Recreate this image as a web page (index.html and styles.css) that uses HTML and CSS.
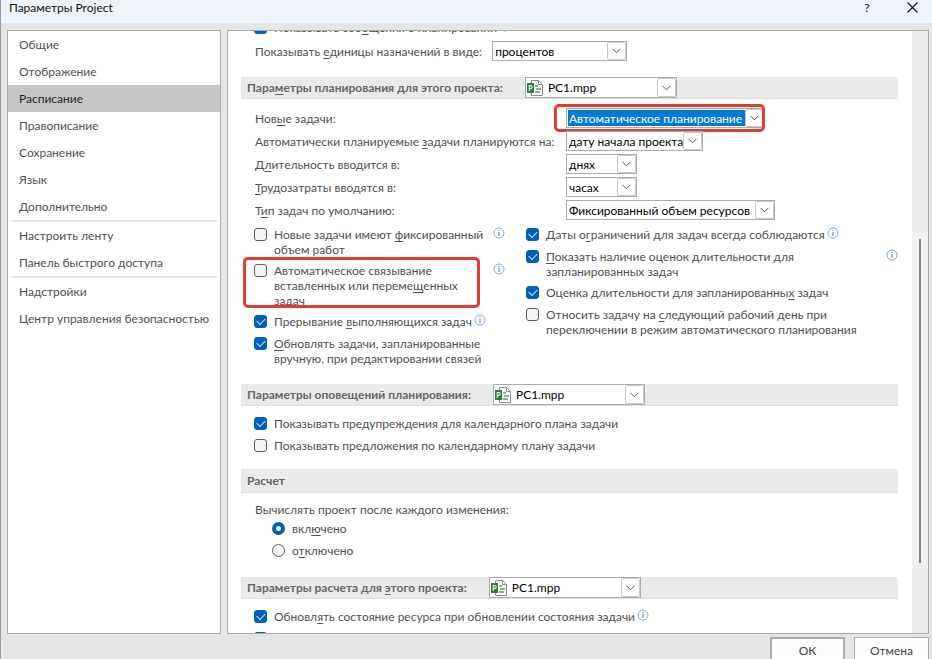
FILE: index.html
```html
<!DOCTYPE html>
<html lang="ru">
<head>
    <meta charset="UTF-8">
    <meta name="viewport" content="width=device-width, initial-scale=1.0">
    <title>Параметры Project</title>
    <link rel="stylesheet" href="styles.css">
</head>
<body>
    <!-- Общие значки -->
    <svg class="symbols" aria-hidden="true">
        <symbol id="chevron" viewBox="0 0 9 6"><path d="M0.5 0.8L4.5 4.8L8.5 0.8" fill="none" stroke="#555" stroke-width="1"/></symbol>
        <symbol id="info" viewBox="0 0 12 12"><circle cx="6" cy="6" r="5" fill="#fff" stroke="#84a7dc" stroke-width="1"/><path d="M5.5 5h1v4h-1zM5.5 3h1v1h-1z" fill="#3f6fb5"/></symbol>
        <symbol id="project" viewBox="0 0 16 16">
            <path d="M4.5 0.5H11.5L15.5 4.5V15.5H4.5Z" fill="#fff" stroke="#8c8c8c"/>
            <path d="M11.5 0.5V4.5H15.5" fill="none" stroke="#8c8c8c"/>
            <path d="M8 5h3v2H8zM9 8h5v2H9zM8 11h5v2H8z" fill="#7fb88a"/>
            <path d="M0 3H7V13H0Z" fill="#2f7a3c"/>
            <text x="1.2" y="10.6" font-size="7" font-weight="700" fill="#fff">P</text>
        </symbol>
    </svg>

    <div class="dialog">
        <header class="titlebar">
            <h1>Параметры Project</h1>
            <button class="title-btn" type="button" aria-label="Справка">?</button>
            <button class="title-btn" type="button" aria-label="Закрыть">
                <svg width="11" height="11" viewBox="0 0 11 11"><path d="M0.5 0.5L10.5 10.5M10.5 0.5L0.5 10.5" stroke="#111" stroke-width="1.1"/></svg>
            </button>
        </header>

        <main class="panels">
            <nav class="sidebar">
                <a href="#">Общие</a>
                <a href="#">Отображение</a>
                <a href="#" class="active">Расписание</a>
                <a href="#">Правописание</a>
                <a href="#">Сохранение</a>
                <a href="#">Язык</a>
                <a href="#">Дополнительно</a>
                <hr>
                <a href="#">Настроить ленту</a>
                <a href="#">Панель быстрого доступа</a>
                <hr>
                <a href="#">Надстройки</a>
                <a href="#">Центр управления безопасностью</a>
            </nav>

            <div class="settings">
                <div class="content">
                    <section class="body top">
                        <div class="check">
                            <input type="checkbox" id="showMessages" checked>
                            <label for="showMessages">Показывать соо<u>б</u>щения о планировании</label>
                            <svg class="info"><use href="#info"/></svg>
                        </div>
                        <div class="units">
                            <label for="units">Показывать <u>е</u>диницы назначений в виде:</label>
                            <span class="select w-units"><select id="units"><option>процентов</option></select><span class="arrow"><svg><use href="#chevron"/></svg></span></span>
                        </div>
                    </section>

                    <div class="head">
                        <label for="planProject">Пара<u>м</u>етры планирования для этого проекта:</label>
                        <span class="select project"><svg class="file"><use href="#project"/></svg><select id="planProject"><option>PC1.mpp</option></select><span class="arrow"><svg><use href="#chevron"/></svg></span></span>
                    </div>
                    <section class="body">
                        <div class="fields">
                            <label for="newTasks">Нов<u>ы</u>е задачи:</label>
                            <span class="select w-mode focused"><select id="newTasks"><option>Автоматическое планирование</option></select><span class="arrow"><svg><use href="#chevron"/></svg></span><span class="mark mark-select"></span></span>
                            <label for="startFrom">Автоматически планируемые <u>з</u>адачи планируются на:</label>
                            <span class="select w-date"><select id="startFrom"><option>дату начала проекта</option></select><span class="arrow"><svg><use href="#chevron"/></svg></span></span>
                            <label for="duration">Д<u>л</u>ительность вводится в:</label>
                            <span class="select w-short"><select id="duration"><option>днях</option></select><span class="arrow"><svg><use href="#chevron"/></svg></span></span>
                            <label for="work"><u>Т</u>рудозатраты вводятся в:</label>
                            <span class="select w-short"><select id="work"><option>часах</option></select><span class="arrow"><svg><use href="#chevron"/></svg></span></span>
                            <label for="taskType">Т<u>и</u>п задач по умолчанию:</label>
                            <span class="select w-type"><select id="taskType"><option>Фиксированный объем ресурсов</option></select><span class="arrow"><svg><use href="#chevron"/></svg></span></span>
                        </div>

                        <div class="columns">
                            <div class="checks">
                                <div class="check wide">
                                    <input type="checkbox" id="fixedWork">
                                    <label for="fixedWork">Новые задачи имеют <u>ф</u>иксированный<br>объем работ</label>
                                    <svg class="info"><use href="#info"/></svg>
                                </div>
                                <div class="check wide">
                                    <input type="checkbox" id="autoLink">
                                    <label for="autoLink">Автоматическое связывание<br>вставленных или переме<u>щ</u>енных<br>задач</label>
                                    <svg class="info"><use href="#info"/></svg>
                                    <span class="mark mark-check"></span>
                                </div>
                                <div class="check">
                                    <input type="checkbox" id="split" checked>
                                    <label for="split">Прерывание <u>в</u>ыполняющихся задач</label>
                                    <svg class="info"><use href="#info"/></svg>
                                </div>
                                <div class="check">
                                    <input type="checkbox" id="update" checked>
                                    <label for="update"><u>О</u>бновлять задачи, запланированные<br>вручную, при редактировании связей</label>
                                </div>
                            </div>
                            <div class="checks">
                                <div class="check">
                                    <input type="checkbox" id="constraints" checked>
                                    <label for="constraints">Даты о<u>г</u>раничений для задач всегда соблюдаются</label>
                                    <svg class="info"><use href="#info"/></svg>
                                </div>
                                <div class="check wide">
                                    <input type="checkbox" id="estimated" checked>
                                    <label for="estimated"><u>П</u>оказать наличие оценок длительности для<br>запланированных задач</label>
                                    <svg class="info"><use href="#info"/></svg>
                                </div>
                                <div class="check">
                                    <input type="checkbox" id="newEstimated" checked>
                                    <label for="newEstimated">Оценка длительности для запланированны<u>х</u> задач</label>
                                </div>
                                <div class="check">
                                    <input type="checkbox" id="nextDay">
                                    <label for="nextDay">Относить задачу на <u>с</u>ледующий рабочий день при<br>переключении в режим автоматического планирования</label>
                                </div>
                            </div>
                        </div>
                    </section>

                    <div class="head">
                        <label for="alertProject">Параметры оповещений планирования:</label>
                        <span class="select project"><svg class="file"><use href="#project"/></svg><select id="alertProject"><option>PC1.mpp</option></select><span class="arrow"><svg><use href="#chevron"/></svg></span></span>
                    </div>
                    <section class="body checks short">
                        <div class="check">
                            <input type="checkbox" id="warnings" checked>
                            <label for="warnings">Показывать предупреждения для календарного плана задачи</label>
                        </div>
                        <div class="check">
                            <input type="checkbox" id="suggestions">
                            <label for="suggestions">Показывать предложения по календарному плану задачи</label>
                        </div>
                    </section>

                    <h2 class="head tall">Расчет</h2>
                    <section class="body">
                        <p id="calcLabel">Вычислять проект после каждого изменения:</p>
                        <div class="checks radios" role="radiogroup" aria-labelledby="calcLabel">
                            <div class="check">
                                <input type="radio" name="calc" id="calcOn" checked>
                                <label for="calcOn">вкл<u>ю</u>чено</label>
                            </div>
                            <div class="check">
                                <input type="radio" name="calc" id="calcOff">
                                <label for="calcOff">о<u>т</u>ключено</label>
                            </div>
                        </div>
                    </section>

                    <div class="head">
                        <label for="calcProject">Параметры расчета для <u>э</u>того проекта:</label>
                        <span class="select project"><svg class="file"><use href="#project"/></svg><select id="calcProject"><option>PC1.mpp</option></select><span class="arrow"><svg><use href="#chevron"/></svg></span></span>
                    </div>
                    <section class="body checks last">
                        <div class="check">
                            <input type="checkbox" id="resStatus" checked>
                            <label for="resStatus">Обновл<u>я</u>ть состояние ресурса при обновлении состояния задачи</label>
                            <svg class="info"><use href="#info"/></svg>
                        </div>
                        <div class="check">
                            <input type="checkbox" id="inserted" aria-label="Вставленные проекты" checked>
                        </div>
                    </section>
                </div>
                <div class="scrollbar"><div class="thumb"></div></div>
            </div>
        </main>

        <footer class="buttons">
            <button class="primary" type="button">ОК</button>
            <button type="button">Отмена</button>
        </footer>
    </div>
</body>
</html>
```

FILE: styles.css
```css
* { box-sizing: border-box; }
body { margin: 0; font-family: "Lato", "Noto Sans", sans-serif; font-size: 12px; line-height: 15px; color: #505050; }
h1, h2, p { margin: 0; font-size: 12px; }
h1 { font-weight: 400; }
u { text-underline-offset: 2px; text-decoration-skip-ink: none; }
button, select, input { font: inherit; margin: 0; }
svg { display: block; }
.symbols { position: absolute; width: 0; height: 0; }

.dialog { display: flex; flex-direction: column; height: 100vh; overflow: hidden; background: #e5e5e5; border-left: 1px solid #9c9c9c; }
.titlebar { display: flex; align-items: flex-start; height: 23px; padding: 0 8px; background: #eff3fa; color: #111; }
.titlebar h1 { flex: 1; }
.title-btn { display: flex; justify-content: center; align-items: center; width: 24px; height: 15px; margin-left: 21px; padding: 0; border: none; background: none; color: #111; }

/* Панели */
.panels { flex: 1; min-height: 0; display: flex; gap: 6px; padding: 7px 3px 0 6px; }
.sidebar { flex: none; width: 214px; border: 1px solid #ababab; background: #fff; }
.sidebar a { display: block; padding: 6px 11px; color: #505050; text-decoration: none; white-space: nowrap; }
.sidebar .active { background: #c5c5c5; color: #262626; }
.sidebar hr { height: 2px; margin: 0 3px; border: none; background: #e3e3e3; }
.settings { flex: 1; min-width: 0; display: flex; border: 1px solid #ababab; background: #fff; overflow: hidden; }
.content { flex: 1; min-width: 0; padding: 0 14px 0 13px; }
.scrollbar { flex: none; width: 16px; padding: 208px 7px 70px; background: #efefef; }
.thumb { width: 2px; height: 100%; background: #858585; }

/* Разделы */
.head { display: flex; align-items: center; gap: 22px; height: 22px; padding-left: 6px; border-bottom: 1px solid #e0e0e0; background: #eaeaea; color: #666; font-weight: 700; white-space: nowrap; }
.tall { height: 24px; }
.body { padding: 9px 0 18px 14px; }
.top { margin-top: -11px; padding: 0 0 16px 14px; }
.short { padding: 10px 0 15px 14px; }
.last { padding-top: 10px; }
.units { display: flex; align-items: center; gap: 10px; margin-top: 5px; }
.fields { display: grid; grid-template-columns: 311px 1fr; align-items: center; row-gap: 3px; white-space: nowrap; }
.columns { display: grid; grid-template-columns: 272px 1fr; margin-top: 7px; }

/* Списки */
.select { position: relative; display: flex; align-items: center; height: 20px; border: 1px solid #ababab; background: #fff; }
.select select { width: 100%; height: 18px; padding: 0 2px; border: none; appearance: none; background: none; color: #000; outline: none; }
.arrow { position: absolute; top: 0; right: 0; bottom: 0; display: flex; justify-content: center; align-items: center; width: 19px; border: 1px solid #c8c8c8; border-radius: 2px; background: #fff; pointer-events: none; }
.arrow svg { width: 9px; height: 6px; }
.w-units { width: 135px; }
.w-mode { width: 199px; }
.w-date { width: 137px; }
.w-short { width: 71px; }
.w-type { width: 209px; }
.project { width: 152px; height: 21px; font-weight: 400; }
.file { flex: none; width: 16px; height: 16px; margin: 0 3px 0 1px; }
.focused select { border: 1px solid #fff; padding: 0 1px; background: #0078d7; color: #fff; }

/* Флажки и переключатели */
.checks { display: flex; flex-direction: column; gap: 6px; }
.check { position: relative; display: flex; align-items: flex-start; min-height: 16px; white-space: nowrap; }
.check input { position: relative; flex: none; appearance: none; width: 13px; height: 13px; margin: 1px 7px 0 -1px; border: 1px solid #5f5f5f; border-radius: 3px; background: #f3f3f3; }
.check input:checked { border-color: #005fb8; background: #005fb8; }
.check input[type="checkbox"]:checked::after { content: ""; position: absolute; left: 2px; top: 2px; width: 7px; height: 4px; border-left: 1px solid #dbe8f5; border-bottom: 1px solid #dbe8f5; transform: rotate(-45deg); }
.check input[type="radio"] { border-radius: 50%; }
.check input[type="radio"]:checked { border-width: 4px; background: #fff; }
.radios { padding: 4px 0 0 18px; }
.info { flex: none; width: 12px; height: 12px; margin-left: 2px; }
.wide .info { margin-left: auto; }
.columns .checks:first-child .wide { padding-right: 22px; }

/* Красные рамки */
.mark { position: absolute; border: 3px solid #e23b30; border-radius: 5px; pointer-events: none; }
.mark-select { inset: -5px -1px -5px -13px; }
.mark-check { inset: -6px 47px 0 -12px; }

.buttons { flex: none; display: flex; justify-content: flex-end; align-items: flex-start; gap: 9px; height: 25px; padding: 3px 3px 0 0; }
.buttons button { flex: none; width: 75px; height: 26px; padding: 0; border: 1px solid #ababab; background: #fdfdfd; color: #444; }
.buttons .primary { border-width: 2px; }
```
